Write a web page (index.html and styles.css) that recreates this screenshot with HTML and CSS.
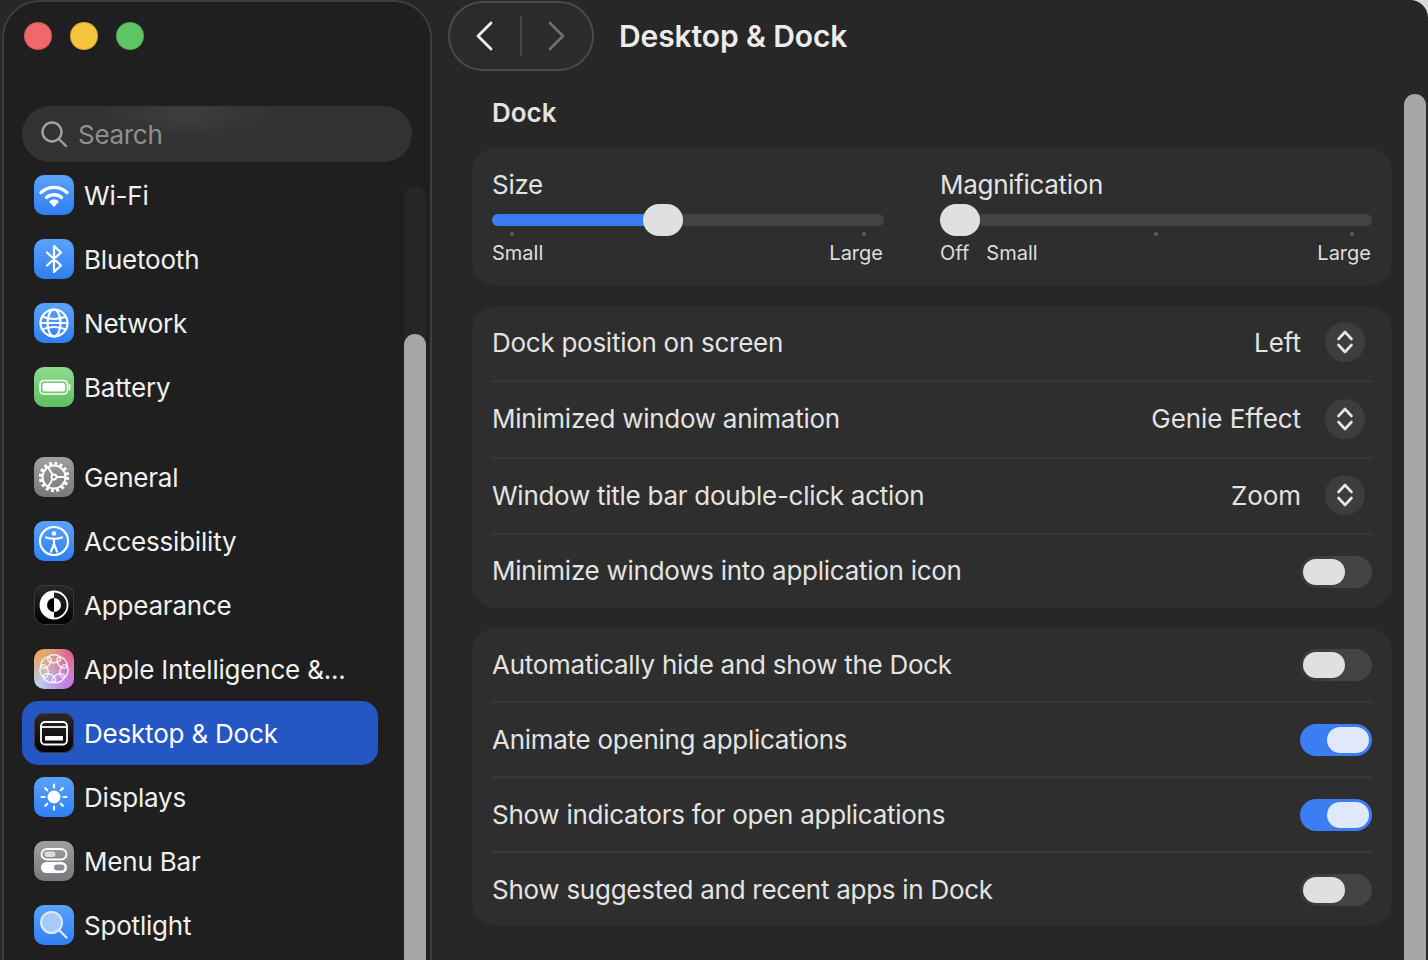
FILE: index.html
```html
<!DOCTYPE html>
<html lang="en">

<head>
    <meta charset="UTF-8">
    <meta name="viewport" content="width=device-width, initial-scale=1.0">
    <title>Desktop &amp; Dock</title>
    <link rel="stylesheet" href="styles.css">
</head>

<body>

    <div class="window">
        <aside class="sidebar">
            <div class="traffic">
                <span class="light red"></span>
                <span class="light yellow"></span>
                <span class="light green"></span>
            </div>

            <div class="search">
                <svg width="28" height="28" viewBox="0 0 28 28" fill="none" stroke="#a0a0a0" stroke-width="2.4" stroke-linecap="round"><circle cx="12" cy="12" r="9.5"/><path d="M19 19l7 7"/></svg>
                <span>Search</span>
            </div>

            <nav class="group">
                <div class="item">
                    <span class="icon blue"><svg viewBox="0 0 40 40" fill="none" stroke="#fff" stroke-width="3.4" stroke-linecap="round"><path d="M7 17.5a19 19 0 0 1 26 0"/><path d="M12.5 22.5a11.500 11.500 0 0 1 15 0"/><path d="M16 26.500a6 6 0 0 1 8 0L20 31z" fill="#fff" stroke="#fff" stroke-width="1.500" stroke-linejoin="round"/></svg></span>
                    Wi-Fi
                </div>
                <div class="item">
                    <span class="icon blue"><svg viewBox="0 0 40 40" fill="none" stroke="#fff" stroke-width="2.200" stroke-linejoin="round" stroke-linecap="round"><path d="M13 13.500l14 13L20 33V7l7 6.500-14 13"/></svg></span>
                    Bluetooth
                </div>
                <div class="item">
                    <span class="icon blue"><svg viewBox="0 0 40 40" fill="none" stroke="#fff" stroke-width="2.200"><circle cx="20" cy="20" r="13.500"/><ellipse cx="20" cy="20" rx="6.500" ry="13.500"/><path d="M8 13.500q12 5 24 0M6.500 20h27M8 26.500q12-5 24 0"/></svg></span>
                    Network
                </div>
                <div class="item">
                    <span class="icon green-icon"><svg viewBox="0 0 40 40" fill="none"><rect x="6" y="13.500" width="27.500" height="13.500" rx="4" stroke="#fff" stroke-width="1.600"/><rect x="8.500" y="16" width="22.500" height="8.500" rx="2" fill="#fff"/><path d="M35.500 18v4.500" stroke="#fff" stroke-width="1.800" stroke-linecap="round"/></svg></span>
                    Battery
                </div>
            </nav>

            <nav class="group">
                <div class="item">
                    <span class="icon gray"><svg viewBox="0 0 40 40" fill="none" stroke="#fff"><circle cx="20" cy="20" r="13.500" stroke-width="3.400" stroke-dasharray="2.900 2.400"/><circle cx="20" cy="20" r="11.500" stroke-width="2"/><circle cx="20" cy="20" r="2.500" stroke-width="1.800"/><path d="M22.500 20H32M18.700 18L14 10M18.700 22L14 30" stroke-width="2"/></svg></span>
                    General
                </div>
                <div class="item">
                    <span class="icon blue"><svg viewBox="0 0 40 40" fill="none" stroke="#fff" stroke-width="2.200" stroke-linecap="round"><circle cx="20" cy="20" r="14"/><circle cx="20" cy="12.500" r="2.300" fill="#fff" stroke="none"/><path d="M12 16.500q8 2.500 16 0M20 18v6M20 23l-3 7.500M20 23l3 7.500"/></svg></span>
                    Accessibility
                </div>
                <div class="item">
                    <span class="icon black"><svg viewBox="0 0 40 40"><circle cx="20" cy="20" r="13.500" fill="none" stroke="#fff" stroke-width="1.800"/><path d="M20 6.500a13.500 13.500 0 0 0 0 27z" fill="#fff"/><path d="M20 13a7 7 0 0 0 0 14z" fill="#000"/><path d="M20 13a7 7 0 0 1 0 14z" fill="#fff"/></svg></span>
                    Appearance
                </div>
                <div class="item">
                    <span class="icon rainbow"><svg viewBox="0 0 40 40" fill="none" stroke="#fff" stroke-opacity="0.800" stroke-width="1.500"><ellipse cx="20" cy="9.800" rx="6.500" ry="4"/><ellipse cx="20" cy="9.800" rx="6.500" ry="4" transform="rotate(51.400 20 20)"/><ellipse cx="20" cy="9.800" rx="6.500" ry="4" transform="rotate(102.900 20 20)"/><ellipse cx="20" cy="9.800" rx="6.500" ry="4" transform="rotate(154.300 20 20)"/><ellipse cx="20" cy="9.800" rx="6.500" ry="4" transform="rotate(205.700 20 20)"/><ellipse cx="20" cy="9.800" rx="6.500" ry="4" transform="rotate(257.100 20 20)"/><ellipse cx="20" cy="9.800" rx="6.500" ry="4" transform="rotate(308.600 20 20)"/></svg></span>
                    Apple Intelligence &amp;...
                </div>
                <div class="item selected">
                    <span class="icon black"><svg viewBox="0 0 40 40" fill="none" stroke="#fff"><rect x="7" y="9" width="26" height="22.500" rx="4" stroke-width="1.800"/><path d="M7 14h26" stroke-width="1.800"/><rect x="11" y="23" width="18" height="4.500" rx="0.500" fill="#fff" stroke="none"/></svg></span>
                    Desktop &amp; Dock
                </div>
                <div class="item">
                    <span class="icon blue"><svg viewBox="0 0 40 40" fill="#fff" stroke="#fff" stroke-width="2.200" stroke-linecap="round"><circle cx="20" cy="20" r="6.500" stroke="none"/><path d="M20 7.500v3M20 29.500v3M7.500 20h3M29.500 20h3M11.200 11.200l2.100 2.100M26.700 26.700l2.100 2.100M11.200 28.800l2.100-2.100M26.700 13.300l2.100-2.100"/></svg></span>
                    Displays
                </div>
                <div class="item">
                    <span class="icon gray"><svg viewBox="0 0 40 40" fill="none"><rect x="7.500" y="8" width="25" height="10.500" rx="5.250" stroke="#fff" stroke-width="1.800"/><rect x="10.500" y="10.500" width="11" height="5.500" rx="2.750" fill="#ddd"/><rect x="7" y="21" width="26" height="11" rx="5.500" fill="#fff"/><rect x="20" y="23.500" width="10.500" height="6" rx="3" fill="#8d8d92"/></svg></span>
                    Menu Bar
                </div>
                <div class="item">
                    <span class="icon blue"><svg viewBox="0 0 40 40" fill="none" stroke="#dfeaff" stroke-width="2" stroke-linecap="round"><circle cx="17.500" cy="17.500" r="10.500" fill="#a9c9fb"/><path d="M25.500 25.500l7 7" stroke-width="2.200"/></svg></span>
                    Spotlight
                </div>
            </nav>

            <div class="track side-track"></div>
            <div class="thumb side-thumb"></div>
        </aside>

        <main class="content">
            <header class="topbar">
                <div class="nav">
                    <svg width="20" height="30" viewBox="0 0 20 30" fill="none" stroke="#f0f0f0" stroke-width="2.800" stroke-linecap="round" stroke-linejoin="round"><path d="M16 2L3 15l13 13"/></svg>
                    <span class="nav-sep"></span>
                    <svg width="20" height="30" viewBox="0 0 20 30" fill="none" stroke="#6f6f6f" stroke-width="2.800" stroke-linecap="round" stroke-linejoin="round"><path d="M4 2l13 13L4 28"/></svg>
                </div>
                <h1>Desktop &amp; Dock</h1>
            </header>

            <h2>Dock</h2>

            <section class="card sliders">
                <div class="slider-box size-box">
                    <div class="slider-title">Size</div>
                    <div class="slider">
                        <div class="bar"><div class="fill"></div></div>
                        <span class="knob size-knob"></span>
                    </div>
                    <div class="ticks"><i></i><i></i></div>
                    <div class="scale"><span>Small</span><span class="push">Large</span></div>
                </div>
                <div class="slider-box mag-box">
                    <div class="slider-title">Magnification</div>
                    <div class="slider">
                        <div class="bar"></div>
                        <span class="knob mag-knob"></span>
                    </div>
                    <div class="ticks"><i></i><i></i><i></i></div>
                    <div class="scale"><span>Off</span><span class="small-mark">Small</span><span class="push">Large</span></div>
                </div>
            </section>

            <section class="card list tall">
                <div class="row">
                    <span>Dock position on screen</span>
                    <div class="value">Left <span class="stepper"><svg width="18" height="26" viewBox="0 0 18 26" fill="none" stroke="#e6e6e6" stroke-width="2.600" stroke-linecap="round" stroke-linejoin="round"><path d="M2.500 10L9 3l6.500 7M2.500 16L9 23l6.500-7"/></svg></span></div>
                </div>
                <div class="row">
                    <span>Minimized window animation</span>
                    <div class="value">Genie Effect <span class="stepper"><svg width="18" height="26" viewBox="0 0 18 26" fill="none" stroke="#e6e6e6" stroke-width="2.600" stroke-linecap="round" stroke-linejoin="round"><path d="M2.500 10L9 3l6.500 7M2.500 16L9 23l6.500-7"/></svg></span></div>
                </div>
                <div class="row">
                    <span>Window title bar double-click action</span>
                    <div class="value">Zoom <span class="stepper"><svg width="18" height="26" viewBox="0 0 18 26" fill="none" stroke="#e6e6e6" stroke-width="2.600" stroke-linecap="round" stroke-linejoin="round"><path d="M2.500 10L9 3l6.500 7M2.500 16L9 23l6.500-7"/></svg></span></div>
                </div>
                <div class="row">
                    <span>Minimize windows into application icon</span>
                    <span class="toggle"></span>
                </div>
            </section>

            <section class="card list short">
                <div class="row">
                    <span>Automatically hide and show the Dock</span>
                    <span class="toggle"></span>
                </div>
                <div class="row">
                    <span>Animate opening applications</span>
                    <span class="toggle on"></span>
                </div>
                <div class="row">
                    <span>Show indicators for open applications</span>
                    <span class="toggle on"></span>
                </div>
                <div class="row">
                    <span>Show suggested and recent apps in Dock</span>
                    <span class="toggle"></span>
                </div>
            </section>

            <div class="thumb main-thumb"></div>
        </main>
    </div>

</body>

</html>
```

FILE: styles.css
```css
* {
    box-sizing: border-box;
}

html,
body {
    margin: 0;
    height: 100%;
    overflow: hidden;
    background-color: #d9d9d9;
}

body {
    font-family: 'Inter', 'Liberation Sans', sans-serif;
    font-size: 26px;
    color: #e3e3e3;
}

.window {
    display: flex;
    height: 960px;
    background-color: #272727;
    border-top-right-radius: 18px;
    padding-left: 2px;
    overflow: hidden;
}

/* sidebar */

.sidebar {
    position: relative;
    flex: 0 0 430px;
    height: 1000px;
    padding: 0 18px;
    background-color: #1f1f1f;
    border: 2px solid #3e3e3e;
    border-radius: 38px 38px 0 0;
}

.traffic {
    display: flex;
    gap: 18px;
    height: 104px;
    padding: 20px 0 0 2px;
}

.light {
    width: 28px;
    height: 28px;
    border-radius: 50%;
    border: 1px solid rgba(0, 0, 0, 0.15);
}

.red {
    background-color: #f0686a;
}

.yellow {
    background-color: #f5c63c;
}

.green {
    background-color: #5fc464;
}

.search {
    display: flex;
    align-items: center;
    gap: 10px;
    width: 390px;
    height: 56px;
    padding-left: 18px;
    border-radius: 28px;
    background: radial-gradient(90px 24px at 165px 8px, #3e3e3e, transparent), #323232;
    color: #8f8f8f;
    letter-spacing: -0.3px;
}

.group {
    width: 356px;
    margin-bottom: 26px;
}

.item {
    display: flex;
    align-items: center;
    gap: 10px;
    height: 64px;
    padding-left: 12px;
    border-radius: 16px;
    color: #f0f0f0;
    letter-spacing: -0.2px;
}

.item.selected {
    background-color: #2456c4;
    color: #fff;
}

.search + .group {
    margin-top: 1px;
}

.icon {
    flex: none;
    display: block;
    width: 40px;
    height: 40px;
    border-radius: 10px;
}

.icon svg {
    display: block;
    width: 40px;
    height: 40px;
}

.blue {
    background: linear-gradient(#5aa2fb, #2f7ff3);
}

.green-icon {
    background: linear-gradient(#8fdc8e, #5cc05e);
}

.gray {
    background: linear-gradient(#a0a0a3, #77777c);
}

.black {
    background: linear-gradient(#2a2a2a, #000);
    box-shadow: inset 0 0 0 1px #3a3a3a;
}

.rainbow {
    background:
        radial-gradient(circle at 0 0, #f2a83e, transparent 60%),
        radial-gradient(circle at 100% 0, #ee4f72, transparent 60%),
        radial-gradient(circle at 100% 100%, #c56be8, transparent 60%),
        radial-gradient(circle at 0 100%, #bcd4f2, transparent 60%),
        #b9b4e0;
}

.track,
.thumb {
    position: absolute;
    width: 22px;
    border-radius: 11px 11px 0 0;
}

.track {
    background-color: #262626;
}

.thumb {
    background-color: #a6a6a6;
}

.side-track {
    top: 184px;
    bottom: 0;
    left: 400px;
}

.side-thumb {
    top: 332px;
    bottom: 0;
    left: 400px;
}

/* main content */

.content {
    position: relative;
    flex: 1;
    padding-left: 40px;
}

.topbar {
    display: flex;
    align-items: center;
    gap: 25px;
    height: 72px;
    margin-left: -24px;
}

.nav {
    display: flex;
    align-items: center;
    justify-content: space-between;
    width: 146px;
    height: 70px;
    padding: 0 26px 0 25px;
    background-color: #2b2b2b;
    border: 2px solid #4a4a4a;
    border-radius: 35px;
}

.nav-sep {
    width: 2px;
    height: 40px;
    background-color: #474747;
}

h1 {
    margin: 0;
    font-size: 30px;
    font-weight: 600;
    letter-spacing: -0.1px;
    color: #ececec;
}

h2 {
    display: flex;
    align-items: center;
    height: 76px;
    margin: 0;
    padding: 4px 0 0 20px;
    font-size: 26px;
    font-weight: 600;
    color: #e3e3e3;
}

.card {
    width: 920px;
    margin-bottom: 20px;
    border-radius: 24px;
    background-color: #2e2e2e;
}

.sliders {
    display: flex;
    gap: 56px;
    height: 138px;
    padding: 20px 20px 0;
}

.size-box {
    width: 392px;
}

.mag-box {
    width: 432px;
}

.slider-title {
    height: 34px;
    line-height: 34px;
    margin-bottom: 2px;
    letter-spacing: -0.3px;
}

.slider {
    position: relative;
    display: flex;
    align-items: center;
    height: 32px;
}

.bar {
    width: 100%;
    height: 12px;
    border-radius: 6px;
    background-color: #434343;
    overflow: hidden;
}

.fill {
    width: 160px;
    height: 12px;
    background-color: #3b7df2;
}

.knob {
    position: absolute;
    top: 0;
    width: 40px;
    height: 32px;
    border-radius: 16px;
    background-color: #e0e0e0;
}

.size-knob {
    left: 151px;
}

.mag-knob {
    left: 0;
}

.ticks {
    display: flex;
    justify-content: space-between;
    height: 4px;
    margin-top: -4px;
    padding: 0 18px;
}

.ticks i {
    width: 4px;
    height: 4px;
    border-radius: 50%;
    background-color: #5c5c5c;
}

.scale {
    display: flex;
    height: 26px;
    line-height: 26px;
    margin-top: 4px;
    padding-right: 1px;
    font-size: 20px;
    color: #dedede;
}

.small-mark {
    margin-left: 17px;
}

.push {
    margin-left: auto;
}

.list {
    display: flex;
    flex-direction: column;
    padding: 0 20px;
}

.tall {
    height: 302px;
}

.short {
    height: 298px;
}

.row {
    display: flex;
    align-items: center;
    justify-content: space-between;
    letter-spacing: -0.27px;
    border-bottom: 2px solid #383838;
}

.row > span:first-child {
    padding-bottom: 2px;
}

.row:last-child {
    flex: 1;
    border-bottom: none;
}

.tall .row {
    height: 76px;
}

.tall .row:nth-child(2) {
    height: 77px;
}

.short .row {
    height: 75px;
    padding-top: 1px;
}

.value {
    display: flex;
    align-items: center;
    gap: 24px;
    margin-top: -2px;
    padding-right: 7px;
    letter-spacing: -0.05px;
}

.stepper {
    display: flex;
    align-items: center;
    justify-content: center;
    width: 40px;
    height: 40px;
    border-radius: 50%;
    background-color: #3d3d3d;
}

.toggle {
    position: relative;
    width: 72px;
    height: 32px;
    border-radius: 16px;
    background: linear-gradient(90deg, #383838, #444 60%);
}

.toggle::after {
    content: "";
    position: absolute;
    top: 3px;
    left: 3px;
    width: 42px;
    height: 26px;
    border-radius: 13px;
    background-color: #e0e0e0;
}

.toggle.on {
    background: #3b7df2;
}

.toggle.on::after {
    left: 27px;
    background-color: #dfe9fb;
}

.main-thumb {
    top: 94px;
    bottom: 0;
    left: 972px;
}
```
